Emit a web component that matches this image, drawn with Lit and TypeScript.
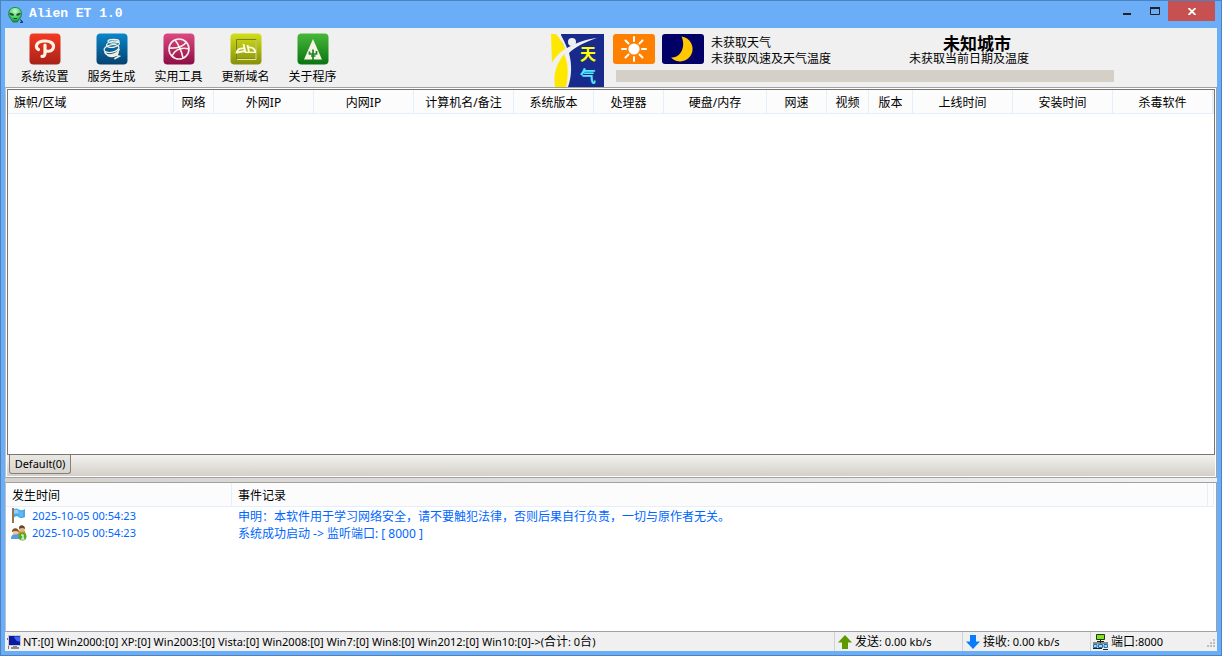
import { LitElement, html, css, svg } from "lit";
import { customElement } from "lit/decorators.js";

const alien = html`<svg width="16" height="16" viewBox="0 0 16 16" aria-hidden="true">
  <defs><radialGradient id="a" cx=".5" cy=".25" r=".8"><stop offset="0" stop-color="#c4ffca"/><stop offset=".5" stop-color="#4fd870"/><stop offset="1" stop-color="#13803a"/></radialGradient></defs>
  <path d="M7 .5C3 .5 .7 3 .7 6.500c0 2.500 1 4.300 2.300 5.500L5 15h4.300l2-3c1.500-1.200 2.200-3 2.200-5.500C13.500 3 11 .5 7 .5z" fill="url(#a)" stroke="#1d7038" stroke-width=".8"/>
  <path d="M1.500 6c2.300-.4 4.200.4 4.700 2.300C4.300 9.200 2 8.300 1.500 6zM12.700 6c-2.300-.4-4.200.4-4.700 2.300 1.900.9 4.200 0 4.700-2.300z" fill="#34423c"/>
  <path d="M5.500 11.500h3.500" stroke="#0b5520"/><path d="M12 12h1v1h1v1h1v2h-3v-1h1z" fill="#174b75"/></svg>`;

const tools = [
  {
    label: "系统设置", top: "#f53a22", bottom: "#a82218",
    glyph: svg`<path d="M9.500 16.500C5.500 14.500 7 8.300 15.500 8c6.300-.2 9.300 2.500 9 6-.4 3.500-3.500 4.800-7 4M16 12v8c0 2.500-1 3.500-3 3.300" fill="none" stroke="#fff3e6" stroke-width="3.200" stroke-linecap="round"/>`,
  },
  {
    label: "服务生成", top: "#0a86cc", bottom: "#04426f",
    glyph: svg`<g fill="none" stroke="#f5efe0" stroke-width="1.300" stroke-linecap="round"><ellipse cx="17.500" cy="8.300" rx="5.500" ry="1.800"/><ellipse cx="17" cy="11.300" rx="6.500" ry="3" transform="rotate(-10 17 11.300)"/><ellipse cx="15.500" cy="15.500" rx="7.500" ry="3.800" transform="rotate(-12 15.500 15.500)"/><path d="M9 19.500c2 4.500 12 2.500 14-3M22 19.500l-1.500 3 2.500.8-4 2.200M12 22.500c3 1.500 6 .8 8-.5" stroke-width="1.800"/></g>`,
  },
  {
    label: "实用工具", top: "#dc4a83", bottom: "#8e0d45",
    glyph: svg`<g fill="none" stroke="#fbeee8" stroke-width="1.600"><circle cx="16" cy="16" r="10"/><path d="M12 7c4 5 6.500 11 8 18M6 15c7 .5 14-1 17.500-6M9 23c3-6 9-9 17-7"/></g>`,
  },
  {
    label: "更新域名", top: "#d3df18", bottom: "#879008",
    glyph: svg`<path d="M6.500 6.500h19.500v19.500H6.500z" fill="none" stroke="#77801c"/><path d="M26 7v19.500H7" fill="none" stroke="#dfe69a"/><path d="M13.500 11l2 8.500M14 15.500c-4-.5-7 1-7.300 4l8.300-1.500" fill="none" stroke="#fbf9df" stroke-width="1.900"/><path d="M17.500 12l1.500 7M18 14.500c3.500-.5 6.500 1 7.500 4.500" fill="none" stroke="#fbf9df" stroke-width="1.900"/><path d="M15 19.300h11" stroke="#fbf9df" stroke-width="1.400"/>`,
  },
  {
    label: "关于程序", top: "#47b83b", bottom: "#087510",
    glyph: svg`<path d="M16 6l9 20.500H7z" fill="#f8f3e4"/><path d="M16 16.500V27M12.500 18.500v2.500h7v-3M14 23h4.500" fill="none" stroke="#1c8424" stroke-width="1.700"/>`,
  },
];

const weatherLogo = html`<svg width="54" height="53" viewBox="0 0 54 53" role="img" aria-label="天气">
  <path d="M10 0h43v53H15C20 38 18 26 12 19z" fill="#182b8d"/>
  <path d="M0 0h5c5 5 8 11 10 17C8 20 4 25 1 31zM4 53c-2-13 1-23 10-34 6 11 6 23 2 34z" fill="#ffe800"/>
  <path d="M5 0h4c3 4 5 9 7 14 8-5 20-9 30-10-12 4-22 9-28 15 3 11 3 23-1 34h-2c3-13 2-25-2-33C7 24 3 30 0 35v-4c3-7 8-12 14-16C12 9 9 4 5 0z" fill="#f0f0f0"/>
  <circle cx="21" cy="8" r="4" fill="#f0f0f0"/>
  <text x="29" y="26" class="sky">天</text><text x="29" y="48" class="air">气</text></svg>`;

const sun = html`<svg width="42" height="30" viewBox="0 0 42 30" aria-hidden="true"><rect width="42" height="30" rx="3" fill="#ff8000"/><circle cx="21" cy="15" r="5.600" fill="#fff"/><path d="M21 3v4M21 23v4M9 15h4M29 15h4M12.500 6.500l3 3M26.500 20.500l3 3M29.500 6.500l-3 3M15.500 20.500l-3 3" stroke="#fff" stroke-width="2" stroke-linecap="round"/></svg>`;
const moon = html`<svg width="42" height="30" viewBox="0 0 42 30" aria-hidden="true"><rect width="42" height="30" rx="3" fill="#000066"/><path d="M19.500 2.500A12.500 12.500 0 1 1 9 23.500C19 24 24 12 19.500 2.500z" fill="#ffc800"/></svg>`;

const flag = html`<svg width="16" height="16" viewBox="0 0 16 16" aria-hidden="true"><path d="M1 0h2v15H1z" fill="#9a7448"/><path d="M3 1c2-1 4-.5 5 .8 2 .8 4 .5 6-.8v8c-2 1.200-4 1.200-6 .4C6.500 8 5 8 3 9.500z" fill="#4aa9ec"/><path d="M3 2c2-1 3-.5 4.500.8v3C6 5 5 5 3 6z" fill="#8fd3fb"/><path d="M9 3.500v5M11 3.500v5" stroke="#79c4f7"/></svg>`;
const people = html`<svg width="16" height="16" viewBox="0 0 16 16" aria-hidden="true"><path d="M7 6h7l1 5H6z" fill="#c29b3d"/><circle cx="11" cy="3.800" r="3" fill="#e8b487"/><path d="M8 4c-.5-5 6-5 6 0-2-1.500-4-1.500-6 0z" fill="#6d421e"/><path d="M0 14c0-4 2-5 5-5s4 2 4 5z" fill="#5d9ade"/><circle cx="4.500" cy="6.500" r="3" fill="#f1c59c"/><path d="M1 7c-.5-5 7-5 7 0-2-1.500-5-1.500-7 0z" fill="#84512a"/><circle cx="11.500" cy="11.500" r="4" fill="#56a828"/><path d="M10 10h2v4M10 14h3.500" fill="none" stroke="#fff" stroke-width="1.200"/></svg>`;
const monitor = html`<svg width="14" height="14" viewBox="0 0 14 14" aria-hidden="true"><path d="M0 3h2v11H1V5H0z" fill="#777"/><rect x="1.500" y=".5" width="12" height="10" fill="#0b1a9e" stroke="#c8c8c8"/><path d="M7 1.500h6v5C10 7 8 5 7 1.500z" fill="#3e65f2"/><path d="M6 11h4v1h2v2H4v-2h2z" fill="#8a8a8a"/></svg>`;
const up = html`<svg width="14" height="14" viewBox="0 0 14 14" aria-hidden="true"><path d="M7 0l7 7.500h-4V14H4V7.500H0z" fill="#5c9a00"/></svg>`;
const down = html`<svg width="14" height="14" viewBox="0 0 14 14" aria-hidden="true"><path d="M7 14L0 6.500h4V0h6v6.500h4z" fill="#0a7bff"/></svg>`;
const network = html`<svg width="15" height="16" viewBox="0 0 15 16" aria-hidden="true"><path d="M3.500 .5h8v5h-8z" fill="#7fe01c" stroke="#1c3b10"/><path d="M4 7.500h7M7.500 6v3M0 9h15" stroke="#222"/><g fill="#9fd6ff" stroke="#1f6fae"><path d="M.5 10.500h3.500v3H.5zM5.500 10.500h4v3h-4zM11 10.500h3.500v3H11z"/></g><path d="M0 14.500h9M10 15.500h5" stroke="#222"/></svg>`;

const columns: [string, number][] = [
  ["旗帜/区域", 166], ["网络", 40], ["外网IP", 100], ["内网IP", 100], ["计算机名/备注", 100],
  ["系统版本", 80], ["处理器", 70], ["硬盘/内存", 103], ["网速", 60], ["视频", 42],
  ["版本", 44], ["上线时间", 100], ["安装时间", 100], ["杀毒软件", 100],
];

const events = [
  { icon: flag, time: "2025-10-05 00:54:23", text: "申明：本软件用于学习网络安全，请不要触犯法律，否则后果自行负责，一切与原作者无关。" },
  { icon: people, time: "2025-10-05 00:54:23", text: "系统成功启动 -> 监听端口: [ 8000 ]" },
];

@customElement("app-root")
export class AppRoot extends LitElement {
  static styles = css`
    :host { display: block; font: 12px/16px "Noto Sans", "Noto Sans CJK SC", sans-serif; color: #000; }
    * { box-sizing: border-box; }
    svg { display: block; flex: none; }
    button { font: inherit; color: inherit; border: 0; padding: 0; margin: 0; background: none; }
    table { border-collapse: separate; border-spacing: 0; table-layout: fixed; width: 100%; }
    th, td { padding: 0; font-weight: normal; white-space: nowrap; }
    thead th, thead td { height: 24px; padding-top: 2px; background: #fcfcfc; border-right: 1px solid #e5effb; border-bottom: 1px solid #e5effb; }
    .window { height: 100vh; display: flex; flex-direction: column; background: #6badf6; border: 1px solid #4b83c0; padding: 0 4px 4px; }
    .title { height: 27px; flex: none; display: flex; align-items: flex-start; gap: 5px; padding-left: 3px; }
    .title .mark { margin-top: 6px; }
    .title h1 { margin: 4px auto 0 0; font: bold 13px/18px "Liberation Mono", monospace; color: #fff; }
    .caption { display: flex; padding-right: 2px; }
    .caption button { width: 27px; height: 20px; display: grid; place-items: center; }
    .caption .close { width: 47px; background: #c75050; }
    .client { flex: 1; min-height: 0; display: flex; flex-direction: column; background: #f0f0f0; }
    .toolbar { height: 59px; flex: none; display: flex; padding: 0 103px 0 6px; }
    .tool { width: 67px; display: flex; flex-direction: column; align-items: center; padding-top: 5px; gap: 4px; }
    .weather { margin-left: auto; display: flex; padding-top: 6px; gap: 8px; }
    .sky, .air { font: bold 16px "Noto Sans CJK SC", sans-serif; fill: #ffff00; }
    .air { fill: #55e8ff; }
    .info { width: 501px; display: grid; grid-template-columns: 42px 42px 1fr 205px; column-gap: 7px; align-content: start; row-gap: 6px; }
    .info p { margin: 0; }
    .now { padding-top: 1px; height: 30px; }
    .bar { grid-column: 1 / -1; height: 12px; margin-left: 3px; background: #d4d0c8; }
    .city { height: 30px; }
    .city h2 { margin: 0; padding-left: 34px; font: bold 17px/17px "Noto Sans CJK SC", sans-serif; }
    .hosts { flex: 1; min-height: 0; display: flex; flex-direction: column; border: 1px solid #a0a0a8; border-left-color: #c0c0c6; padding: 1px; background: #fff; }
    .list { flex: 1; min-height: 0; border: 1px solid #7a766f; background: #fff; overflow: hidden; }
    .list th:first-child { text-align: left; padding-left: 6px; }
    .tabs { height: 21px; flex: none; display: flex; padding-left: 2px; background: linear-gradient(#f3f2f0, #d4d0c8); }
    .tabs button { height: 19px; width: 62px; font-size: 11px; border: 1px solid #85817a; border-top: 0; border-radius: 0 0 3px 3px; background: linear-gradient(#e9e7e3, #d9d5ce); }
    .split { height: 4px; flex: none; background: linear-gradient(to right, #d6d2ca, #f0f0f0); }
    .log { height: 150px; flex: none; border: 1px solid #a0a0a8; border-left-color: #c0c0c6; background: #fff; padding-right: 2px; overflow: hidden; }
    .log th { text-align: left; padding-left: 6px; }
    .log tbody td { height: 17px; line-height: 14px; color: #0066ff; padding: 3px 0 0 6px; }
    .log tbody td:first-child { padding: 1px 0 0 5px; line-height: 16px; }
    .stamp { display: flex; gap: 5px; font-size: 11px; }
    .status { height: 19px; flex: none; display: flex; align-items: center; font-size: 11px; line-height: 18px; }
    .status div { display: flex; align-items: center; gap: 3px; height: 19px; padding-left: 3px; }
    .status .systems { flex: 1; gap: 2px; padding-left: 2px; }
    .status .cell { width: 128px; border-left: 1px solid #d2d2d2; }
    .status .port { width: 127px; padding-left: 2px; }
    .status .grip { margin-left: auto; margin-top: 5px; }
    .cjk { font-size: 12px; }
  `;

  render() {
    return html`<div class="window">
      <header class="title">
        <span class="mark">${alien}</span>
        <h1>Alien ET 1.0</h1>
        <div class="caption">
          <button aria-label="最小化"><svg width="9" height="12"><path d="M0 9h8" stroke="#222" stroke-width="2"/></svg></button>
          <button aria-label="最大化"><svg width="10" height="8"><path d="M.5 1.500h9v6h-9z" fill="none" stroke="#222"/><path d="M0 1h10" stroke="#222" stroke-width="2"/></svg></button>
          <button class="close" aria-label="关闭"><svg width="8" height="7"><path d="M.5 0l7 7M7.500 0l-7 7" stroke="#fff" stroke-width="1.800"/></svg></button>
        </div>
      </header>
      <main class="client">
        <nav class="toolbar">
          ${tools.map((t, i) => html`<button class="tool">
            <svg width="32" height="32" viewBox="0 0 32 32" aria-hidden="true">
              <defs><linearGradient id="g${i}" x2="0" y2="1"><stop stop-color=${t.top}/><stop offset="1" stop-color=${t.bottom}/></linearGradient></defs>
              <rect x=".5" y=".5" width="31" height="31" rx="4" fill="url(#g${i})"/>${t.glyph}
            </svg>
            <span>${t.label}</span>
          </button>`)}
          <section class="weather">
            ${weatherLogo}
            <div class="info">
              ${sun}${moon}
              <div class="now"><p>未获取天气</p><p>未获取风速及天气温度</p></div>
              <div class="city"><h2>未知城市</h2><p>未获取当前日期及温度</p></div>
              <div class="bar"></div>
            </div>
          </section>
        </nav>
        <section class="hosts">
          <div class="list"><table>
            <colgroup>${columns.map(([, w]) => html`<col style="width:${w}px">`)}<col></colgroup>
            <thead><tr>${columns.map(([name]) => html`<th scope="col">${name}</th>`)}<td></td></tr></thead>
          </table></div>
          <div class="tabs"><button>Default(0)</button></div>
        </section>
        <div class="split"></div>
        <section class="log"><table>
          <colgroup><col style="width:226px"><col><col style="width:6px"></colgroup>
          <thead><tr><th scope="col">发生时间</th><th scope="col">事件记录</th><td></td></tr></thead>
          <tbody>${events.map((e) => html`<tr><td><span class="stamp">${e.icon}${e.time}</span></td><td>${e.text}</td></tr>`)}</tbody>
        </table></section>
        <footer class="status">
          <div class="systems">${monitor}<span>NT:[0] Win2000:[0] XP:[0] Win2003:[0] Vista:[0] Win2008:[0] Win7:[0] Win8:[0] Win2012:[0] Win10:[0]-&gt;(<span class="cjk">合计</span>: 0<span class="cjk">台</span>)</span></div>
          <div class="cell">${up}<span><span class="cjk">发送</span>: 0.00 kb/s</span></div>
          <div class="cell">${down}<span><span class="cjk">接收</span>: 0.00 kb/s</span></div>
          <div class="cell port">${network}<span><span class="cjk">端口</span>:8000</span>
            <svg class="grip" width="10" height="10" aria-hidden="true"><path d="M6 0h2v2H6zM3 3h2v2H3zM6 3h2v2H6zM0 6h2v2H0zM3 6h2v2H3zM6 6h2v2H6z" fill="#bdbdbd"/></svg></div>
        </footer>
      </main>
    </div>`;
  }
}
